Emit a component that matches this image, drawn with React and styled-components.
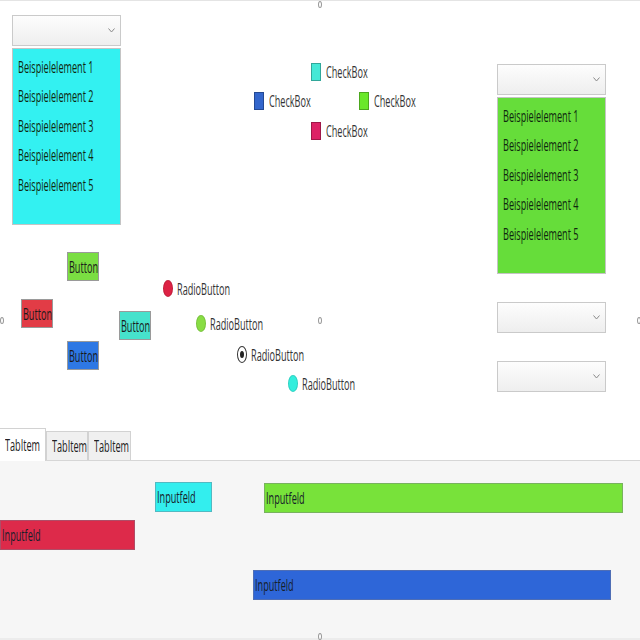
import React from 'react';
import styled, { createGlobalStyle } from 'styled-components';

const GlobalStyle = createGlobalStyle`
  html, body {
    margin: 0;
    padding: 0;
    background: #fff;
  }
  body {
    font-family: 'Open Sans', 'Liberation Sans', sans-serif;
    color: #1b1b1b;
  }
`;

const Window = styled.div`
  position: relative;
  width: 640px;
  height: 640px;
  overflow: hidden;
  background: #fff;
  border-top: 1px solid #e4e4e4;
  box-sizing: border-box;
  display: flex;
  flex-direction: column;
`;

// design surface: controls sit where the designer dropped them
const Canvas = styled.div`
  position: relative;
  height: 427px;
  flex: none;
`;

const Text = styled.span`
  display: inline-block;
  font-size: 16px;
  line-height: 1;
  white-space: nowrap;
  transform: scaleX(0.57);
  transform-origin: ${({ $center }) => ($center ? 'center' : 'left')} center;
`;

/* ComboBox */
const Combo = styled.div`
  position: absolute;
  left: ${({ $x }) => $x}px;
  top: ${({ $y }) => $y}px;
  width: 109px;
`;

const ComboField = styled.div`
  height: 31px;
  box-sizing: border-box;
  border: 1px solid #cacaca;
  background: linear-gradient(#fdfdfd, #eeeeee);
  display: flex;
  align-items: center;
  justify-content: flex-end;
  padding-right: 5px;
`;

const ComboList = styled.div`
  margin-top: 2px;
  height: 177px;
  box-sizing: border-box;
  border: 1px solid #c4c4c4;
  background: ${({ $color }) => $color};
  padding: 3px 0 0 5px;
  display: flex;
  flex-direction: column;
`;

const ComboItem = styled.div`
  height: 29.5px;
  display: flex;
  align-items: center;
  color: #10280f;
`;

const Chevron = () => (
  <svg width="7" height="5" viewBox="0 0 7 5">
    <polyline points="0.5,0.5 3.5,4 6.5,0.5" fill="none" stroke="#8a8a8a" strokeWidth="1" />
  </svg>
);

const ComboBox = ({ x, y, color }) => (
  <Combo $x={x} $y={y}>
    <ComboField>
      <Chevron />
    </ComboField>
    {color && (
      <ComboList $color={color}>
        {[1, 2, 3, 4, 5].map((n) => (
          <ComboItem key={n}>
            <Text>Beispielelement {n}</Text>
          </ComboItem>
        ))}
      </ComboList>
    )}
  </Combo>
);

/* CheckBox */
const Check = styled.label`
  position: absolute;
  left: ${({ $x }) => $x}px;
  top: ${({ $y }) => $y}px;
  display: flex;
  align-items: center;
  gap: 5px;
  color: #333;
`;

const CheckSquare = styled.span`
  width: 10px;
  height: 18px;
  box-sizing: border-box;
  border: 1px solid rgba(0, 0, 0, 0.28);
  background: ${({ $color }) => $color};
`;

const CheckBox = ({ x, y, color }) => (
  <Check $x={x} $y={y}>
    <CheckSquare $color={color} />
    <Text>CheckBox</Text>
  </Check>
);

/* Button */
const Btn = styled.div`
  position: absolute;
  left: ${({ $x }) => $x}px;
  top: ${({ $y }) => $y}px;
  width: 32px;
  height: 29px;
  box-sizing: border-box;
  border: 1px solid #9a9a9a;
  background: ${({ $color }) => $color};
  display: flex;
  align-items: center;
  justify-content: center;
  color: #1a1a1a;
`;

const Button = ({ x, y, color }) => (
  <Btn $x={x} $y={y} $color={color}>
    <Text $center>Button</Text>
  </Btn>
);

/* RadioButton */
const Radio = styled.label`
  position: absolute;
  left: ${({ $x }) => $x}px;
  top: ${({ $y }) => $y}px;
  display: flex;
  align-items: center;
  gap: 4px;
  color: #333;
`;

const RadioDot = styled.span`
  width: 10px;
  height: 17px;
  border-radius: 50%;
  box-sizing: border-box;
  display: flex;
  align-items: center;
  justify-content: center;
  background: ${({ $color }) => $color || '#fff'};
  border: 1px solid ${({ $color }) => ($color ? 'rgba(0,0,0,0.12)' : '#333')};

  &::after {
    content: '';
    display: ${({ $color }) => ($color ? 'none' : 'block')};
    width: 4px;
    height: 7px;
    border-radius: 50%;
    background: #222;
  }
`;

const RadioButton = ({ x, y, color }) => (
  <Radio $x={x} $y={y}>
    <RadioDot $color={color} />
    <Text>RadioButton</Text>
  </Radio>
);

/* TabControl */
const TabStrip = styled.div`
  display: flex;
  align-items: flex-end;
  height: 33px;
  flex: none;
  border-bottom: 1px solid #d6d6d6;
  box-sizing: border-box;
`;

const Tab = styled.div`
  width: ${({ $w }) => $w}px;
  height: ${({ $active }) => ($active ? 33 : 29)}px;
  box-sizing: border-box;
  border: 1px solid #d2d2d2;
  border-bottom: none;
  border-left: ${({ $first }) => ($first ? 'none' : '1px solid #d2d2d2')};
  margin-bottom: ${({ $active }) => ($active ? -1 : 0)}px;
  background: ${({ $active }) => ($active ? '#fff' : '#f0f0f0')};
  display: flex;
  align-items: center;
  padding-left: 5px;
  color: #222;
`;

const TabPanel = styled.div`
  position: relative;
  flex: 1;
  background: #f6f6f6;
  border-bottom: 2px solid #ececec;
`;

const Input = styled.div`
  position: absolute;
  left: ${({ $x }) => $x}px;
  top: ${({ $y }) => $y}px;
  width: ${({ $w }) => $w}px;
  height: 30px;
  box-sizing: border-box;
  border: 1px solid rgba(120, 120, 140, 0.45);
  background: ${({ $color }) => $color};
  display: flex;
  align-items: center;
  padding-left: 1px;
  color: #17202a;
`;

// design-time resize handles
const Handle = styled.span`
  position: absolute;
  left: ${({ $x }) => $x}px;
  top: ${({ $y }) => $y}px;
  width: 4px;
  height: 7px;
  box-sizing: border-box;
  border: 1px solid #9a9a9a;
  border-radius: 50%;
  background: #fff;
`;

const App = () => (
  <Window>
    <GlobalStyle />
    <Canvas>
      <ComboBox x={12} y={14} color="#33f1f1" />
      <ComboBox x={497} y={63} color="#66dd3a" />
      <ComboBox x={497} y={301} />
      <ComboBox x={497} y={360} />

      <CheckBox x={311} y={62} color="#44e8d6" />
      <CheckBox x={254} y={91} color="#3366cc" />
      <CheckBox x={359} y={91} color="#6ae82a" />
      <CheckBox x={311} y={121} color="#dd2266" />

      <Button x={67} y={251} color="#7ade42" />
      <Button x={21} y={298} color="#e23c46" />
      <Button x={119} y={310} color="#46e2cc" />
      <Button x={67} y={340} color="#2e78e4" />

      <RadioButton x={163} y={279} color="#dd2244" />
      <RadioButton x={196} y={314} color="#88dd44" />
      <RadioButton x={237} y={345} />
      <RadioButton x={288} y={374} color="#33eedd" />
    </Canvas>

    <TabStrip>
      <Tab $w={46} $first $active>
        <Text>TabItem</Text>
      </Tab>
      <Tab $w={42}>
        <Text>TabItem</Text>
      </Tab>
      <Tab $w={43}>
        <Text>TabItem</Text>
      </Tab>
    </TabStrip>
    <TabPanel>
      <Input $x={155} $y={21} $w={57} $color="#33eeee">
        <Text>Inputfeld</Text>
      </Input>
      <Input $x={0} $y={59} $w={135} $color="#dd2a4a">
        <Text>Inputfeld</Text>
      </Input>
      <Input $x={264} $y={22} $w={359} $color="#78e23a">
        <Text>Inputfeld</Text>
      </Input>
      <Input $x={253} $y={109} $w={358} $color="#2e66d8">
        <Text>Inputfeld</Text>
      </Input>
    </TabPanel>

    <Handle $x={318} $y={0} />
    <Handle $x={318} $y={316} />
    <Handle $x={318} $y={632} />
    <Handle $x={0} $y={316} />
    <Handle $x={637} $y={316} />
  </Window>
);

export default App;
